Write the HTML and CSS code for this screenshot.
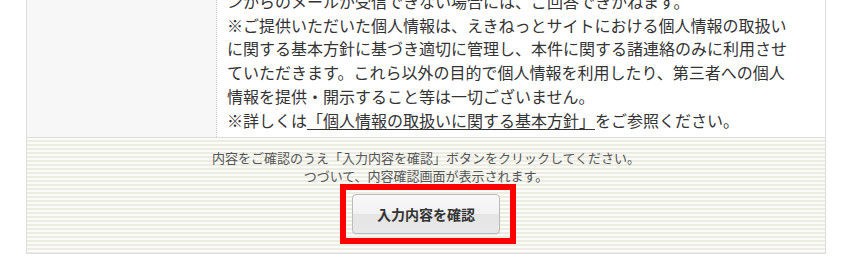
FILE: index.html
```html
<!DOCTYPE html>
<html lang="ja">
<head>
<meta charset="utf-8">
<title>入力内容を確認</title>
<link rel="stylesheet" href="styles.css">
</head>
<body>
<div class="form">
  <div class="row">
    <div class="label"></div>
    <div class="value">
      <p class="notice">ンからのメールが受信できない場合には、ご回答できかねます。<br>※ご提供いただいた個人情報は、えきねっとサイトにおける個人情報の取扱い<br>に関する基本方針に基づき適切に管理し、本件に関する諸連絡のみに利用させ<br>ていただきます。これら以外の目的で個人情報を利用したり、第三者への個人<br>情報を提供・開示すること等は一切ございません。<br>※詳しくは<a class="policy" href="#">「個人情報の取扱いに関する基本方針」</a>をご参照ください。</p>
    </div>
  </div>
  <div class="footer">
    <p class="guide">内容をご確認のうえ「入力内容を確認」ボタンをクリックしてください。<br>つづいて、内容確認画面が表示されます。</p>
    <div class="btn-wrap">
      <button class="btn" type="button">入力内容を確認</button>
      <span class="highlight"></span>
    </div>
  </div>
</div>
</body>
</html>
```
FILE: styles.css
```css
html, body {
  margin: 0;
  padding: 0;
  background: #ffffff;
}

body {
  font-family: "Noto Sans CJK JP", "Noto Sans", sans-serif;
  color: #333333;
}

.form {
  width: 800px;
  box-sizing: border-box;
  margin: -21px 0 0 26px;
  border: 1px solid #dddddd;
}

.row {
  display: grid;
  grid-template-columns: 190px 1fr;
  border-bottom: 1px solid #dddddd;
}

.label {
  background: #f7f7f7;
  border-right: 1px dotted #cccccc;
}

.value {
  padding: 10px 20px 5px 10px;
  background: #ffffff;
}

.notice {
  margin: 0;
  font-size: 16px;
  line-height: 23.7px;
  white-space: nowrap;
}

.policy {
  color: #333333;
  text-decoration: underline;
  text-underline-offset: 2px;
}

.footer {
  padding: 11px 0 19px;
  text-align: center;
  background: repeating-linear-gradient(to bottom, #fbfbf8 0, #fbfbf8 2px, #ececE2 2px, #ececE2 4px);
}

.guide {
  margin: 0;
  font-size: 13px;
  line-height: 18px;
  color: #555555;
}

.btn-wrap {
  position: relative;
  display: inline-block;
  margin-top: 9px;
  vertical-align: top;
}

.btn {
  display: block;
  width: 148px;
  height: 40px;
  padding: 0;
  border: 1px solid #bbbbbb;
  border-radius: 4px;
  background: linear-gradient(to bottom, #f8f8f8 0%, #f2f2f2 50%, #e5e5e5 50%, #e8e8e8 100%);
  box-shadow: 0 1px 1px rgba(0, 0, 0, 0.08);
  font-family: "Noto Sans CJK JP", "Noto Sans", sans-serif;
  font-size: 14px;
  font-weight: bold;
  color: #333333;
  cursor: pointer;
}

.highlight {
  position: absolute;
  left: -12px;
  top: -10px;
  width: 176px;
  height: 60px;
  box-sizing: border-box;
  border: 6px solid #ff0000;
  pointer-events: none;
}
```
